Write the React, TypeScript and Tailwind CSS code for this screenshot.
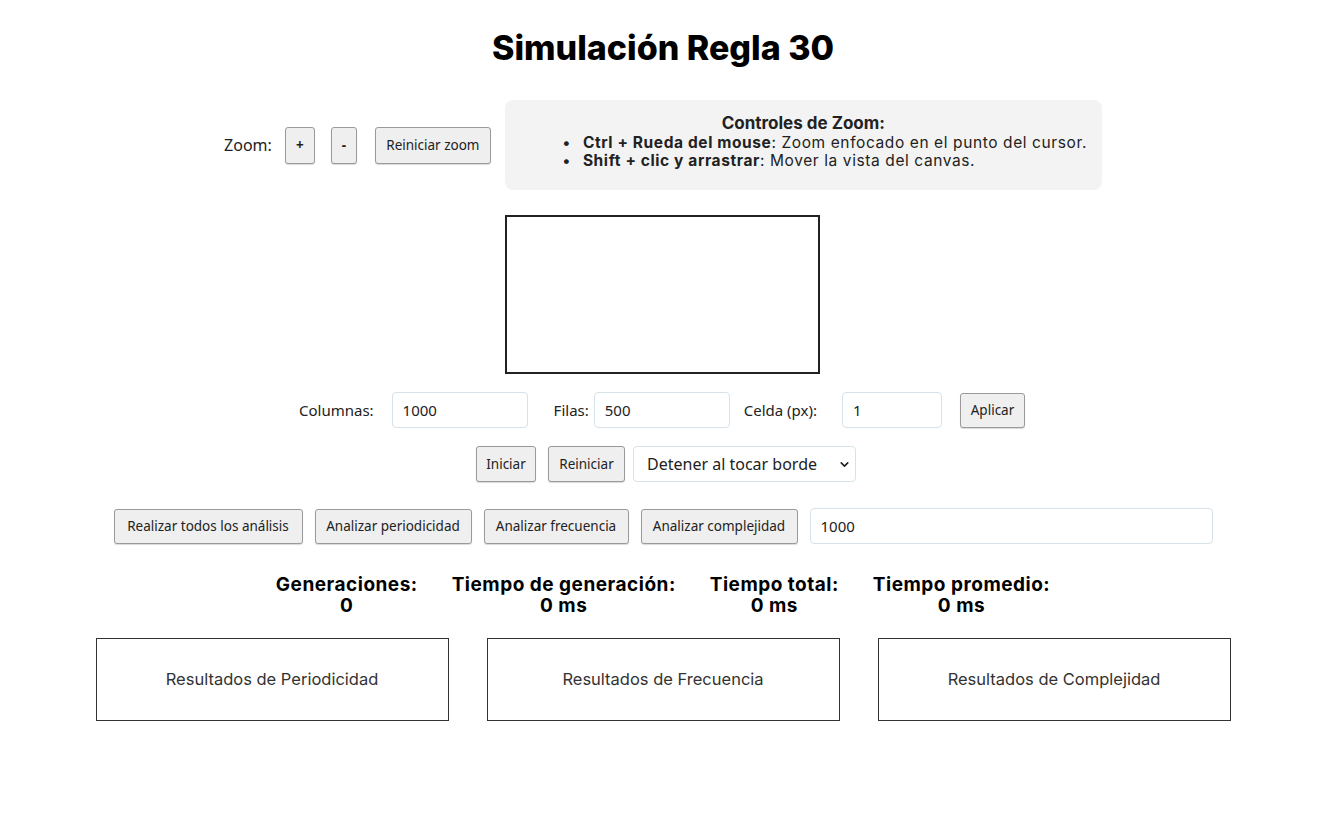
import { ChevronDown } from 'lucide-react';

const btn =
  'bg-[#efefef] border border-[#9a9a9a] rounded-[3px] text-[13.5px] text-[#222] shadow-[0_1px_1px_rgba(0,0,0,0.15)] flex items-center justify-center';
const input =
  'h-[36px] border border-[#d6e2ea] rounded-[4px] px-[10px] text-[15px] text-[#222] flex items-center bg-white';

const stats = [
  { label: 'Generaciones:', value: '0' },
  { label: 'Tiempo de generación:', value: '0 ms' },
  { label: 'Tiempo total:', value: '0 ms' },
  { label: 'Tiempo promedio:', value: '0 ms' },
];

const results = ['Resultados de Periodicidad', 'Resultados de Frecuencia', 'Resultados de Complejidad'];

export default function App() {
  return (
    <div className="min-h-[828px] w-[1326px] bg-white text-[#222] font-['Noto_Sans',sans-serif] flex flex-col items-center">
      {/* Title */}
      <h1 className="mt-[28px] text-[34px] leading-[40px] font-extrabold text-black font-['Inter',sans-serif]">
        Simulación Regla 30
      </h1>

      {/* Zoom controls */}
      <div className="mt-[32px] flex items-center">
        <span className="text-[16px] mr-[13px]">Zoom:</span>
        <button className={`${btn} w-[30px] h-[37px] font-bold`}>+</button>
        <button className={`${btn} w-[26px] h-[37px] ml-[16px] font-bold`}>-</button>
        <button className={`${btn} w-[116px] h-[37px] ml-[18px]`}>Reiniciar zoom</button>
        <div className="ml-[14px] w-[597px] h-[90px] bg-[#f3f3f3] rounded-[8px] pt-[13px] font-['Inter',sans-serif]">
          <div className="text-center text-[17px] font-bold leading-[20px]">Controles de Zoom:</div>
          <ul className="mt-[1px] ml-[57px] text-[15.5px] leading-[18px] tracking-[0.6px]">
            <li className="flex">
              <span className="w-[21px]">•</span>
              <span>
                <b>Ctrl + Rueda del mouse</b>: Zoom enfocado en el punto del cursor.
              </span>
            </li>
            <li className="flex">
              <span className="w-[21px]">•</span>
              <span>
                <b>Shift + clic y arrastrar</b>: Mover la vista del canvas.
              </span>
            </li>
          </ul>
        </div>
      </div>

      {/* Canvas */}
      <div className="mt-[25px] mr-[2px] w-[315px] h-[159px] border-2 border-[#222] bg-white" />

      {/* Grid size inputs */}
      <div className="mt-[18px] mr-[2px] flex items-center text-[15px]">
        <span>Columnas:</span>
        <div className={`${input} ml-[18px] w-[136px]`}>1000</div>
        <span className="ml-[26px]">Filas:</span>
        <div className={`${input} ml-[5px] w-[136px]`}>500</div>
        <span className="ml-[14px]">Celda (px):</span>
        <div className={`${input} ml-[25px] w-[100px]`}>1</div>
        <button className={`${btn} ml-[18px] w-[65px] h-[35px]`}>Aplicar</button>
      </div>

      {/* Run controls */}
      <div className="mt-[18px] pl-[6px] flex items-center">
        <button className={`${btn} w-[60px] h-[36px]`}>Iniciar</button>
        <button className={`${btn} ml-[12px] w-[77px] h-[36px]`}>Reiniciar</button>
        <div className={`${input} ml-[8px] w-[223px] justify-between pr-[4px] pl-[13px] text-[16px]`}>
          <span>Detener al tocar borde</span>
          <ChevronDown size={13} strokeWidth={3} />
        </div>
      </div>

      {/* Analysis */}
      <div className="mt-[26px] flex items-center gap-[12px]">
        <button className={`${btn} w-[189px] h-[35px]`}>Realizar todos los análisis</button>
        <button className={`${btn} w-[157px] h-[35px]`}>Analizar periodicidad</button>
        <button className={`${btn} w-[145px] h-[35px]`}>Analizar frecuencia</button>
        <button className={`${btn} w-[157px] h-[35px]`}>Analizar complejidad</button>
        <div className={`${input} w-[403px] h-[35px] text-[15px]`}>1000</div>
      </div>

      {/* Stats */}
      <div className="mt-[31px] flex items-start gap-[34px] font-['Inter',sans-serif] font-bold text-[19px] leading-[20.5px] tracking-[0.5px] text-black">
        {stats.map((s) => (
          <div key={s.label} className="flex flex-col items-center">
            <span>{s.label}</span>
            <span>{s.value}</span>
          </div>
        ))}
      </div>

      {/* Results */}
      <div className="mt-[22px] flex gap-[38px]">
        {results.map((r) => (
          <div
            key={r}
            className="w-[353px] h-[83px] border border-[#333] flex items-center justify-center text-[16.5px] text-[#333] font-['Inter',sans-serif]"
          >
            {r}
          </div>
        ))}
      </div>
    </div>
  );
}
